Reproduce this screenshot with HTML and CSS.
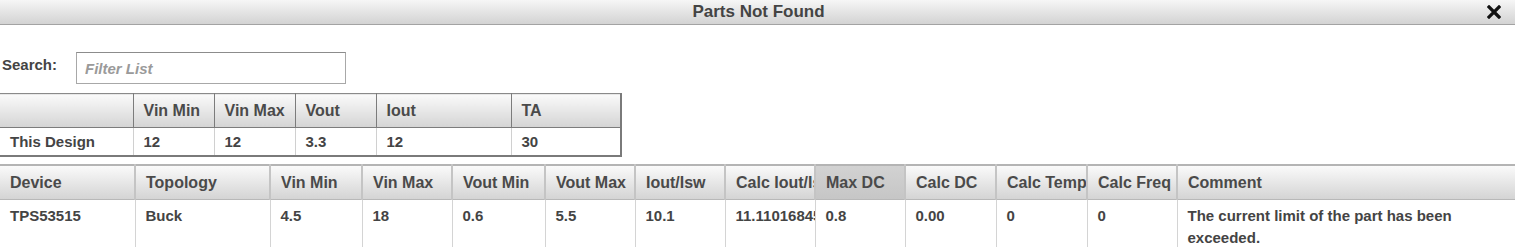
FILE: index.html
```html
<!DOCTYPE html>
<html lang="en">
<head>
    <meta charset="UTF-8">
    <title>Parts Not Found</title>
    <link rel="stylesheet" href="styles.css">
</head>
<body>

    <!-- Dialog title -->
    <div class="titlebar">
        <span></span>
        <span class="title">Parts Not Found</span>
        <button class="close" title="Close">
            <svg width="14" height="14" viewBox="0 0 14 14">
                <path d="M2 2 L12 12 M12 2 L2 12" stroke="#111" stroke-width="3.2" stroke-linecap="square"/>
            </svg>
        </button>
    </div>

    <!-- Filter -->
    <div class="search-row">
        <label for="filter">Search:</label>
        <input id="filter" type="text" placeholder="Filter List">
    </div>

    <!-- Design requirements -->
    <table class="grid design">
        <colgroup>
            <col style="width: 133px">
            <col style="width: 81px">
            <col style="width: 81px">
            <col style="width: 81px">
            <col style="width: 135px">
            <col style="width: 110px">
        </colgroup>
        <thead>
            <tr><th></th><th>Vin Min</th><th>Vin Max</th><th>Vout</th><th>Iout</th><th>TA</th></tr>
        </thead>
        <tbody>
            <tr><td>This Design</td><td>12</td><td>12</td><td>3.3</td><td>12</td><td>30</td></tr>
        </tbody>
    </table>

    <!-- Parts list -->
    <table class="grid parts">
        <colgroup>
            <col style="width: 135px">
            <col style="width: 135px">
            <col style="width: 92px">
            <col style="width: 90px">
            <col style="width: 93px">
            <col style="width: 90px">
            <col style="width: 90px">
            <col style="width: 90px">
            <col style="width: 90px">
            <col style="width: 91px">
            <col style="width: 91px">
            <col style="width: 90px">
            <col>
        </colgroup>
        <thead>
            <tr>
                <th>Device</th><th>Topology</th><th>Vin Min</th><th>Vin Max</th><th>Vout Min</th><th>Vout Max</th>
                <th>Iout/Isw</th><th>Calc Iout/Isw</th><th class="sorted">Max DC</th><th>Calc DC</th>
                <th>Calc Temp</th><th>Calc Freq</th><th>Comment</th>
            </tr>
        </thead>
        <tbody>
            <tr>
                <td>TPS53515</td><td>Buck</td><td>4.5</td><td>18</td><td>0.6</td><td>5.5</td>
                <td>10.1</td><td>11.11016845</td><td>0.8</td><td>0.00</td><td>0</td><td>0</td>
                <td class="comment">The current limit of the part has been exceeded.</td>
            </tr>
        </tbody>
    </table>

</body>
</html>
```

FILE: styles.css
```css
body, html {
    margin: 0;
    padding: 0;
    overflow: hidden;
    background: #fff;
    font-family: 'Liberation Sans', Arial, sans-serif;
    font-weight: bold;
    color: #444;
}
.titlebar {
    height: 24px;
    display: grid;
    grid-template-columns: 1fr auto 1fr;
    align-items: center;
    background: linear-gradient(#f6f6f6, #d3d3d3);
    border-bottom: 1px solid #a3a3a3;
}
.title {
    font-size: 17px;
    color: #444;
    padding-left: 2px;
}
.close {
    justify-self: end;
    margin-right: 14px;
    padding: 0;
    border: none;
    background: none;
    width: 14px;
    height: 14px;
    cursor: pointer;
}
.close svg { display: block; }

.search-row {
    display: flex;
    align-items: center;
    padding: 27px 0 0 2px;
    height: 32px;
}
.search-row label {
    font-size: 15px;
    width: 74px;
    padding-bottom: 7px;
}
.search-row input {
    box-sizing: border-box;
    width: 270px;
    height: 32px;
    border: 1px solid #a8a8a8;
    border-top-color: #8c8c8c;
    padding: 0 8px;
    font-family: inherit;
    font-size: 15px;
    font-weight: bold;
    font-style: italic;
    color: #444;
}
.search-row input::placeholder {
    color: #9a9a9a;
}

.grid {
    border-collapse: collapse;
    table-layout: fixed;
    font-size: 15px;
}
.grid th,
.grid td {
    text-align: left;
    padding: 0 0 0 10px;
    white-space: nowrap;
    overflow: hidden;
    text-overflow: clip;
}
.grid th {
    height: 33px;
    font-size: 16px;
    background: linear-gradient(#fafafa, #d4d4d4);
    color: #4a4a4a;
}

.design {
    width: 621px;
    margin-top: 9px;
    border-top: 1px solid #8a8a8a;
    border-right: 2px solid #7a7a7a;
    border-bottom: 2px solid #7a7a7a;
}
.design th {
    border-left: 1px solid #7c7c7c;
    border-bottom: 1px solid #7c7c7c;
}
.design th:first-child { border-left: none; }
.design td {
    height: 27px;
    border-left: 1px solid #d0d0d0;
}
.design td:first-child { border-left: none; }

.parts {
    width: 1515px;
    margin-top: 7px;
    border-top: 2px solid #b4b4b4;
}
.parts th {
    border-left: 2px solid #c4c4c4;
    border-bottom: 1px solid #b8b8b8;
}
.parts th:first-child { border-left: none; }
.parts th.sorted {
    background: linear-gradient(#d2d2d2, #c6c6c6);
}
.parts td {
    vertical-align: top;
    height: 49px;
    padding-top: 5px;
    line-height: 22px;
    border-left: 1px solid #d4d4d4;
}
.parts td:first-child { border-left: none; }
.parts td.comment {
    white-space: normal;
    padding-right: 56px;
}
```
